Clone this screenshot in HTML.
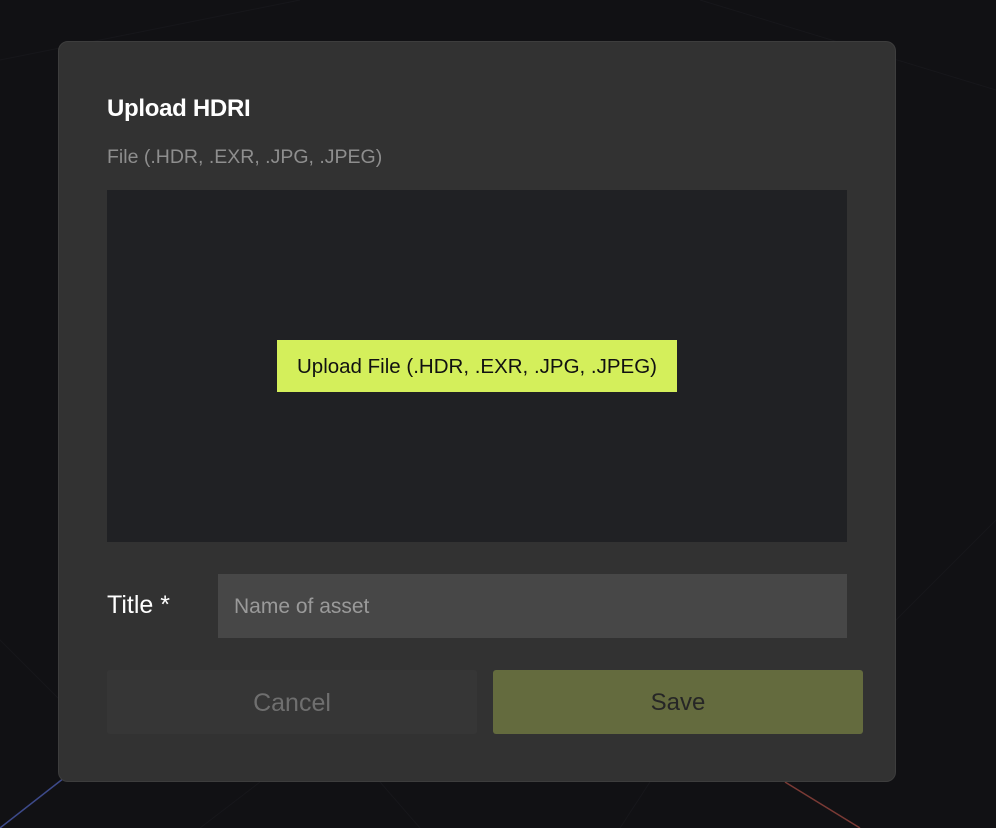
<!DOCTYPE html>
<html><head><style>
body{margin:0;width:996px;height:828px;background:#111114;position:relative;overflow:hidden;font-family:"Liberation Sans",sans-serif}
.m{position:absolute;left:58px;top:41px;width:836px;height:739px;background:#323232;border:1px solid #3d3d3d;border-radius:10px}
.a{position:absolute;white-space:nowrap}
</style></head><body>
<svg class="a" style="left:0;top:0" width="996" height="828">
<g stroke="#17171b" stroke-width="1">
<line x1="0" y1="60" x2="300" y2="0"/><line x1="700" y1="0" x2="996" y2="90"/>
<line x1="0" y1="640" x2="60" y2="700"/><line x1="896" y1="620" x2="996" y2="520"/>
<line x1="200" y1="828" x2="260" y2="782"/><line x1="420" y1="828" x2="380" y2="782"/>
<line x1="620" y1="828" x2="650" y2="782"/>
</g>
<line x1="0" y1="828" x2="64" y2="778" stroke="#3d4a8a" stroke-width="1.5"/>
<line x1="785" y1="782" x2="860" y2="828" stroke="#7a3a35" stroke-width="1.5"/>
</svg>
<div class="m"></div>
<div class="a" style="left:107px;top:95px;color:#fff;font-weight:bold;font-size:24px;letter-spacing:-0.3px">Upload HDRI</div>
<div class="a" style="left:107px;top:146px;color:#8e8e8e;font-size:19.5px">File (.HDR, .EXR, .JPG, .JPEG)</div>
<div class="a" style="left:107px;top:190px;width:740px;height:352px;background:#202124"></div>
<div class="a" style="left:277px;top:340px;width:400px;height:52px;background:#d4ef5b;color:#111;font-size:20.5px;line-height:54px;text-align:center">Upload File (.HDR, .EXR, .JPG, .JPEG)</div>
<div class="a" style="left:107px;top:591px;color:#fff;font-size:25px">Title *</div>
<div class="a" style="left:218px;top:574px;width:629px;height:64px;background:#474747;color:#9a9a9a;font-size:21px;line-height:66px;padding-left:16px;box-sizing:border-box">Name of asset</div>
<div class="a" style="left:107px;top:670px;width:370px;height:64px;background:#363636;border-radius:3px;color:#6f6f6f;font-size:25px;line-height:66px;text-align:center">Cancel</div>
<div class="a" style="left:493px;top:670px;width:370px;height:64px;background:#646b3e;border-radius:3px;color:#262626;font-size:24px;line-height:66px;text-align:center">Save</div>
</body></html>
